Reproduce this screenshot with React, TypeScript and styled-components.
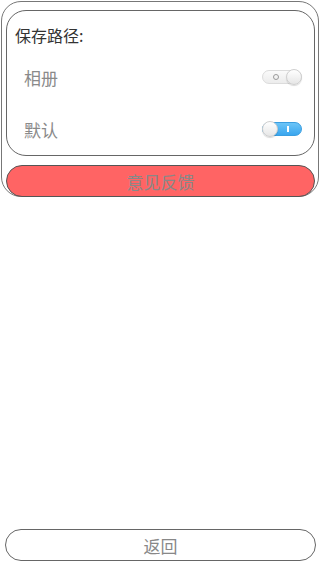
import React from 'react';
import styled, { createGlobalStyle } from 'styled-components';

const GlobalStyle = createGlobalStyle`
    html, body {
        margin: 0;
        padding: 0;
        background: #ffffff;
        font-family: "Noto Sans CJK SC", "Noto Sans", sans-serif;
    }
`;

export default function App() {
    const [album, setAlbum] = React.useState(false);
    const [byDefault, setByDefault] = React.useState(true);
    return (
        <>
            <GlobalStyle />
            <Page>
                <Outer>
                    <Card>
                        <Title>保存路径:</Title>
                        <Row>
                            <Label>相册</Label>
                            <Switch $on={album} onClick={() => setAlbum(!album)} />
                        </Row>
                        <Row>
                            <Label>默认</Label>
                            <Switch $on={byDefault} onClick={() => setByDefault(!byDefault)} />
                        </Row>
                    </Card>
                    <PillButton $red>意见反馈</PillButton>
                </Outer>
                <Spacer />
                <PillButton>返回</PillButton>
            </Page>
        </>
    );
}

const Switch = ({ $on, onClick }: { $on: boolean; onClick: () => void }) => (
    <Track $on={$on} onClick={onClick}>
        {$on ? <OnMark /> : <OffMark />}
        <Knob $on={$on} />
    </Track>
);

const Page = styled.div`
    width: 320px;
    height: 570px;
    box-sizing: border-box;
    padding: 1px 4px 9px 5px;
    display: flex;
    flex-direction: column;
`;

const Outer = styled.div`
    margin: 0 -3px 0 -4px;
    border: 1px solid #777;
    border-radius: 20px;
    padding: 8px 3px 0 4px;
    display: flex;
    flex-direction: column;
    gap: 9px;
    height: 196px;
    box-sizing: border-box;
`;

const Card = styled.div`
    border: 1px solid #666;
    border-radius: 20px;
    padding: 14px 12px 0 8px;
    height: 146px;
    box-sizing: border-box;
    display: flex;
    flex-direction: column;
`;

const Title = styled.div`
    font-size: 16px;
    line-height: 20px;
    color: #333;
`;

const Row = styled.div`
    display: flex;
    align-items: center;
    justify-content: space-between;
    height: 52px;
    flex-shrink: 0;
    padding-left: 9px;
    &:nth-of-type(2) {
        margin-top: 6px;
    }
`;

const Label = styled.span`
    font-size: 17px;
    color: #8a8a8a;
`;

const Track = styled.div<{ $on: boolean }>`
    position: relative;
    width: 40px;
    height: 14px;
    border-radius: 7px;
    box-sizing: border-box;
    border: 1px solid ${(p) => (p.$on ? '#3a9ee0' : '#dcdcdc')};
    background: ${(p) => (p.$on ? 'linear-gradient(#6cc4f7, #3aa6ef)' : 'linear-gradient(#fafafa, #ececec)')};
    cursor: pointer;
`;

const Knob = styled.div<{ $on: boolean }>`
    position: absolute;
    top: -2px;
    ${(p) => (p.$on ? 'left: -1px;' : 'right: -1px;')}
    width: 16px;
    height: 16px;
    border-radius: 50%;
    box-sizing: border-box;
    background: linear-gradient(#ffffff, #e6e6e6);
    border: 1px solid #cfcfcf;
    box-shadow: 0 1px 1px rgba(0, 0, 0, 0.15);
`;

const OffMark = styled.div`
    position: absolute;
    left: 10px;
    top: 3px;
    width: 6px;
    height: 6px;
    border-radius: 50%;
    border: 1px solid #9a9a9a;
    box-sizing: border-box;
`;

const OnMark = styled.div`
    position: absolute;
    left: 24px;
    top: 3px;
    width: 2px;
    height: 6px;
    background: #ffffff;
`;

const PillButton = styled.div<{ $red?: boolean }>`
    height: 32px;
    flex-shrink: 0;
    border-radius: 16px;
    border: 1px solid ${(p) => (p.$red ? '#555' : '#666')};
    background: ${(p) => (p.$red ? '#ff6464' : '#ffffff')};
    box-sizing: border-box;
    display: flex;
    align-items: center;
    justify-content: center;
    font-size: 17px;
    color: #888;
`;

const Spacer = styled.div`
    flex: 1;
`;
